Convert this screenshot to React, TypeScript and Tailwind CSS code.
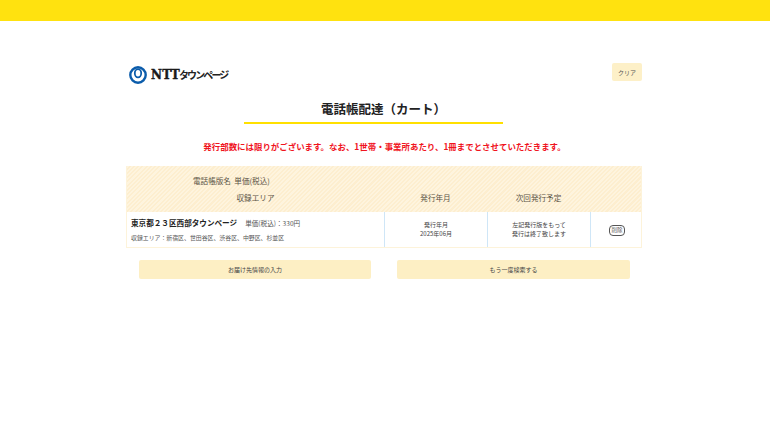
const JP = "font-['Noto_Sans_CJK_JP','Noto_Sans',sans-serif]"

const STRIPES = 'bg-[repeating-linear-gradient(135deg,#fef4de_0px,#fef4de_1.5px,#fdeecf_1.5px,#fdeecf_3px)]'

function Logo() {
  return (
    <div className="flex items-center gap-[3px]">
      <svg width="20" height="18" viewBox="0 0 20 18" className="shrink-0">
        <circle cx="10" cy="9" r="7.7" fill="none" stroke="#0b5cab" strokeWidth="2.4" />
        <ellipse cx="10" cy="7.2" rx="3.2" ry="4.1" fill="none" stroke="#0b5cab" strokeWidth="1.8" />
      </svg>
      <span className="font-['DejaVu_Serif',serif] text-[12px] leading-none font-bold tracking-[0.2px] text-[#1a1a1a] [-webkit-text-stroke:0.4px_#1a1a1a]">NTT</span>
      <span className="-ml-[4px] text-[10px] leading-none font-bold tracking-[-1.9px] text-[#222]">タウンページ</span>
    </div>
  )
}

export default function App() {
  return (
    <div className={`h-[432px] w-[770px] overflow-hidden bg-white ${JP}`}>
      <div className="h-[21px] bg-[#ffe20f]" />

      <div className="ml-[126px] w-[516px]">
        {/* ロゴ */}
        <div className="flex h-[60px] items-start justify-between pt-[42px]">
          <div className="mt-[3px] ml-[2px]">
            <Logo />
          </div>
          <button className="h-[18px] w-[30px] rounded-[2px] bg-[#fdf0c8] text-[6px] text-[#555]">クリア</button>
        </div>

        {/* 見出し */}
        <h1 className="mt-[15px] ml-[118px] h-[28px] w-[259px] border-b-[2px] border-[#ffe000] pt-[2px] pl-[20px] text-center text-[12.5px] leading-[21px] font-bold text-[#222]">
          電話帳配達（カート）
        </h1>

        <p className="mt-[12px] pl-[1px] text-center text-[8.45px] leading-[20px] font-bold whitespace-nowrap text-[#f0141e]">
          発行部数には限りがございます。なお、1世帯・事業所あたり、1冊までとさせていただきます。
        </p>

        {/* テーブル */}
        <div className="mt-[10px] border-x border-b border-[#fdf3da]">
          <div className={`flex h-[46px] ${STRIPES} text-[7.6px] text-[#5a5346]`}>
            <div className="flex w-[257px] flex-col pt-[8px] leading-[13px]">
              <div className="pl-[66px]">電話帳版名&nbsp;&nbsp;単価(税込)</div>
              <div className="mt-[4px] text-center">収録エリア</div>
            </div>
            <div className="flex w-[103px] items-start justify-center pt-[25px] leading-[13px]">発行年月</div>
            <div className="flex w-[103px] items-start justify-center pt-[25px] leading-[13px]">次回発行予定</div>
          </div>
          <div className="flex h-[35px] text-[#444]">
            <div className="w-[257px] pl-[4px]">
              <div className="mt-[4px] flex items-baseline">
                <span className="text-[7.6px] leading-[13px] font-bold text-[#222]">東京都２３区西部タウンページ</span>
                <span className="ml-[8px] text-[6.6px] leading-[13px] text-[#555]">単価(税込)：330円</span>
              </div>
              <div className="mt-[3px] text-[5.9px] leading-[9px] text-[#555]">収録エリア：新宿区、世田谷区、渋谷区、中野区、杉並区</div>
            </div>
            <div className="flex w-[103px] flex-col items-center justify-center border-l border-[#cfe6f7] pb-[2px] text-[6px] leading-[9px]">
              <div>発行年月</div>
              <div>2025年06月</div>
            </div>
            <div className="flex w-[103px] flex-col items-center justify-center border-l border-[#cfe6f7] pb-[2px] text-[6px] leading-[9px]">
              <div>左記発行版をもって</div>
              <div>発行は終了致します</div>
            </div>
            <div className="flex flex-1 items-center justify-center border-l border-[#cfe6f7] pt-[1px] pl-[2px]">
              <button className="h-[11px] w-[16px] rounded-[4px] border border-[#555] text-[5.5px] leading-[9px] whitespace-nowrap text-[#555]">削除</button>
            </div>
          </div>
        </div>

        {/* ボタン */}
        <div className="mt-[12px] flex gap-[26px] pl-[13px]">
          <button className="h-[19px] w-[232px] rounded-[2px] bg-[#fdefc4] text-[6px] text-[#444]">お届け先情報の入力</button>
          <button className="h-[19px] w-[233px] rounded-[2px] bg-[#fdefc4] text-[6px] text-[#444]">もう一度検索する</button>
        </div>
      </div>
    </div>
  )
}
